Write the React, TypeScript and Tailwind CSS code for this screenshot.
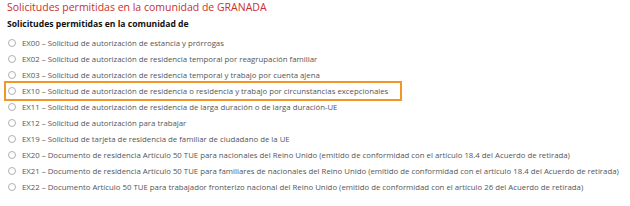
const items = [
  'EX00 – Solicitud de autorización de estancia y prórrogas',
  'EX02 – Solicitud de autorización de residencia temporal por reagrupación familiar',
  'EX03 – Solicitud de autorización de residencia temporal y trabajo por cuenta ajena',
  'EX10 – Solicitud de autorización de residencia o residencia y trabajo por circunstancias excepcionales',
  'EX11 – Solicitud de autorización de residencia de larga duración o de larga duración-UE',
  'EX12 – Solicitud de autorización para trabajar',
  'EX19 – Solicitud de tarjeta de residencia de familiar de ciudadano de la UE',
  'EX20 – Documento de residencia Artículo 50 TUE para nacionales del Reino Unido (emitido de conformidad con el artículo 18.4 del Acuerdo de retirada)',
  'EX21 – Documento de residencia Artículo 50 TUE para familiares de nacionales del Reino Unido (emitido de conformidad con el artículo 18.4 del Acuerdo de retirada)',
  'EX22 – Documento Artículo 50 TUE para trabajador fronterizo nacional del Reino Unido (emitido de conformidad con el artículo 26 del Acuerdo de retirada)',
]

export default function App() {
  return (
    <div className="w-[630px] h-[206px] bg-white overflow-hidden font-['Open_Sans',sans-serif]">
      <h2 className="pl-[7px] text-[10.5px] leading-[14px] text-[#c9302c]">
        Solicitudes permitidas en la comunidad de GRANADA
      </h2>
      <p className="pl-[7px] mt-[4px] text-[8.6px] leading-[12px] font-bold text-[#111]">
        Solicitudes permitidas en la comunidad de
      </p>
      <ul className="mt-[5px]">
        {items.map((txt, i) => (
          <li key={txt} className="relative flex items-center h-4 pl-[8px]">
            {i === 3 && (
              <span className="absolute left-[4px] w-[398px] top-[-2px] bottom-[-2px] border-2 border-[#f39626]" />
            )}
            <span className="w-[8px] h-[8px] rounded-full border border-[#b0b0b0] bg-white shrink-0" />
            <span className="ml-[6px] text-[7.8px] leading-4 text-[#555] whitespace-nowrap">{txt}</span>
          </li>
        ))}
      </ul>
    </div>
  )
}
